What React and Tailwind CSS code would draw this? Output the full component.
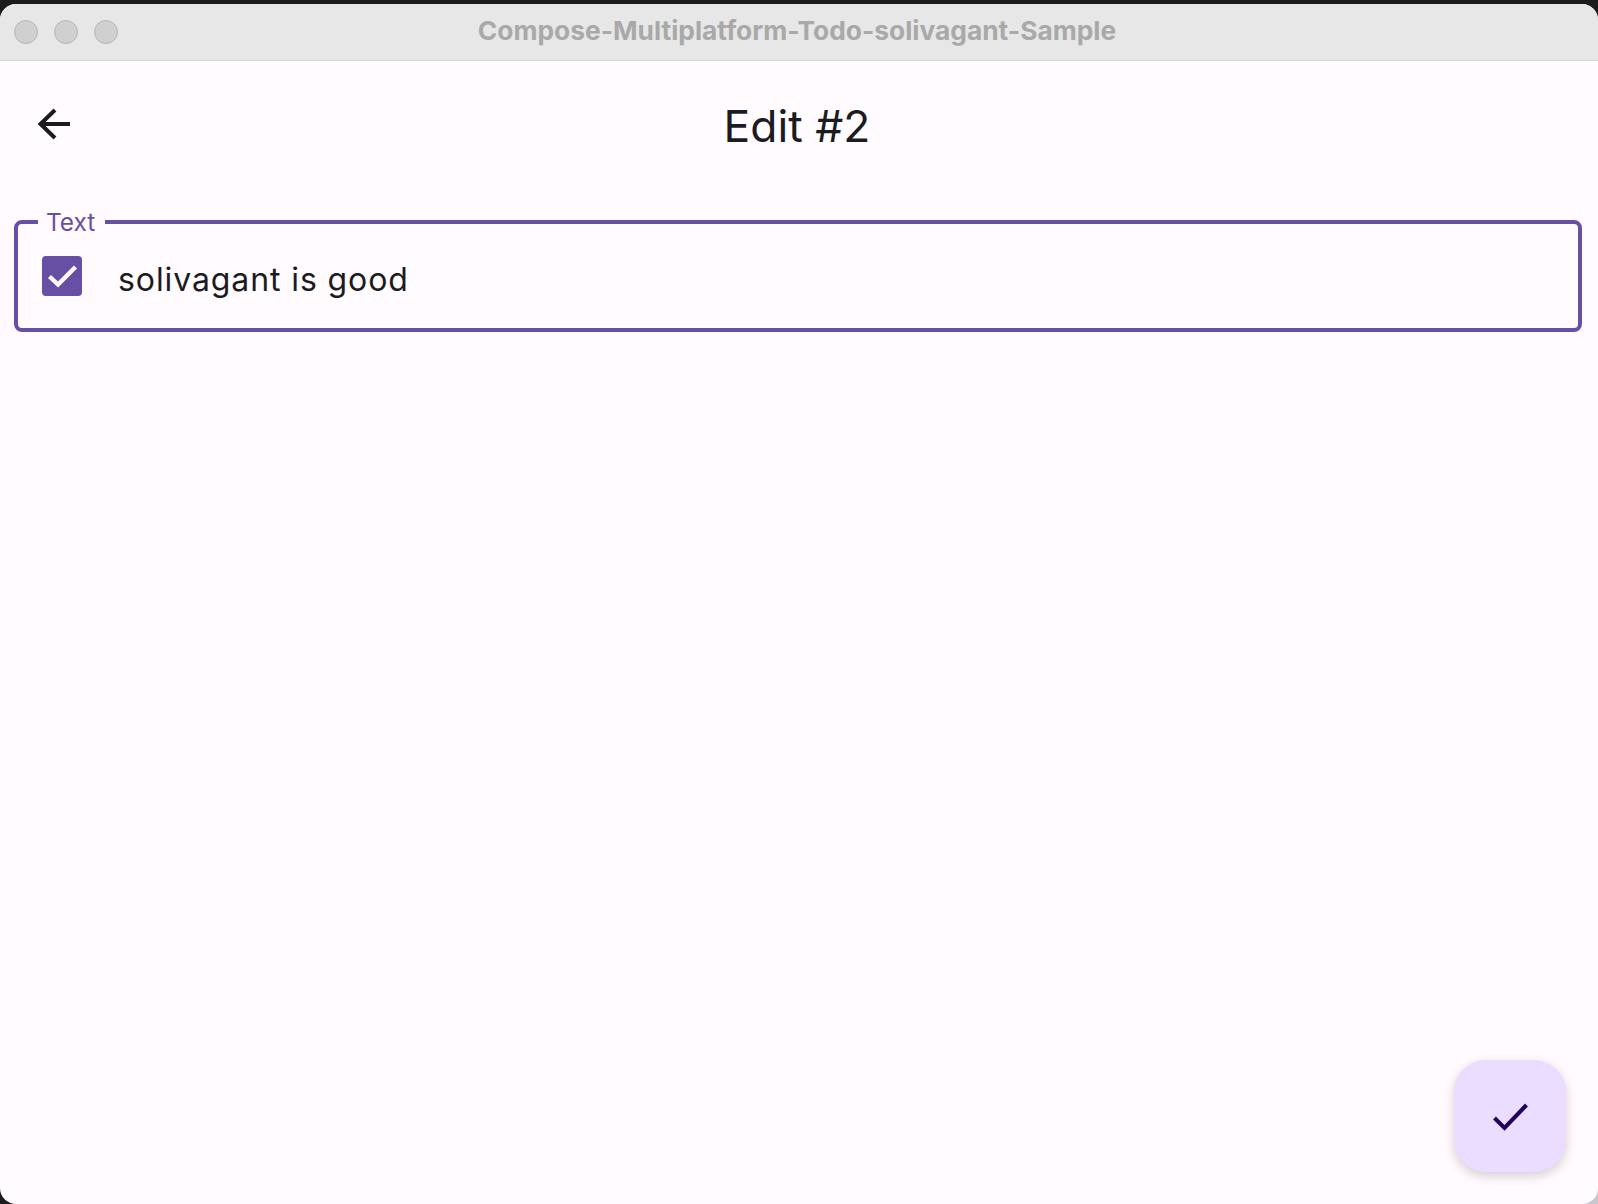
import React from "react";

const Light = () => (
  <div className="w-6 h-6 rounded-full bg-[#d0d0d0] border border-[#b4b4b4]" />
);

const App = () => {
  return (
    <div className="relative h-[1204px] bg-[#1c1c1f] pt-1 font-['Inter',sans-serif]">
      {/* desktop showing through behind the bottom right corner */}
      <div className="absolute right-0 bottom-0 w-5 h-5 bg-[#cbc7cf]" />
      <div className="relative flex flex-col h-full rounded-[16px] overflow-hidden bg-[#fffbfe]">
        <div className="relative flex items-center h-[57px] shrink-0 pl-[14px] gap-4 bg-[#e7e7e7] border-b border-[#d5d5d5]">
          <Light />
          <Light />
          <Light />
          <div className="absolute inset-0 flex items-center justify-center pr-[4px] pb-[3px] text-[26.35px] font-bold text-[#a9a9a9]">
            Compose-Multiplatform-Todo-solivagant-Sample
          </div>
        </div>

        <div className="relative flex items-center h-[127px] shrink-0 pl-[37px] pb-[2px]">
          <svg width="34" height="34" viewBox="0 0 34 34" fill="none" stroke="#1c1b1f" strokeWidth="4">
            <path d="M33 17H4" />
            <path d="M18 3L3.5 17L18 31" />
          </svg>
          <h1 className="absolute inset-0 flex items-center justify-center pt-[4px] pr-[4px] text-[44.4px] text-[#1c1b1f]">
            Edit #2
          </h1>
        </div>

        <div className="relative flex items-start ml-[14px] mr-[16px] mt-[32px] h-[112px] pl-[24px] pt-[32px] gap-[36px] border-[4px] border-[#6750a4] rounded-[8px]">
          <span className="absolute -top-[18px] left-[20px] pl-[8px] pr-[10px] bg-[#fffbfe] text-[24.4px] leading-[32px] text-[#6750a4]">
            Text
          </span>
          <div className="w-10 h-10 shrink-0 rounded-[4px] bg-[#6750a4]">
            <svg width="40" height="40" viewBox="0 0 40 40" fill="none" stroke="#fffbfe" strokeWidth="4.4">
              <path d="M7.5 20.5L16 28.5L33.5 11" />
            </svg>
          </div>
          <span className="pt-[2px] text-[32px] leading-[44px] tracking-[0.9px] text-[#1c1b1f]">solivagant is good</span>
        </div>

        <button className="absolute right-[32px] bottom-[32px] w-[112px] h-[112px] rounded-[32px] bg-[#eaddff] shadow-[0_4px_12px_rgba(0,0,0,0.18)]">
          <svg width="112" height="112" viewBox="0 0 112 112" fill="none" stroke="#21005d" strokeWidth="4">
            <path d="M40.5 58L50.5 68L72.5 45" />
          </svg>
        </button>
      </div>
    </div>
  );
};

export default App;
